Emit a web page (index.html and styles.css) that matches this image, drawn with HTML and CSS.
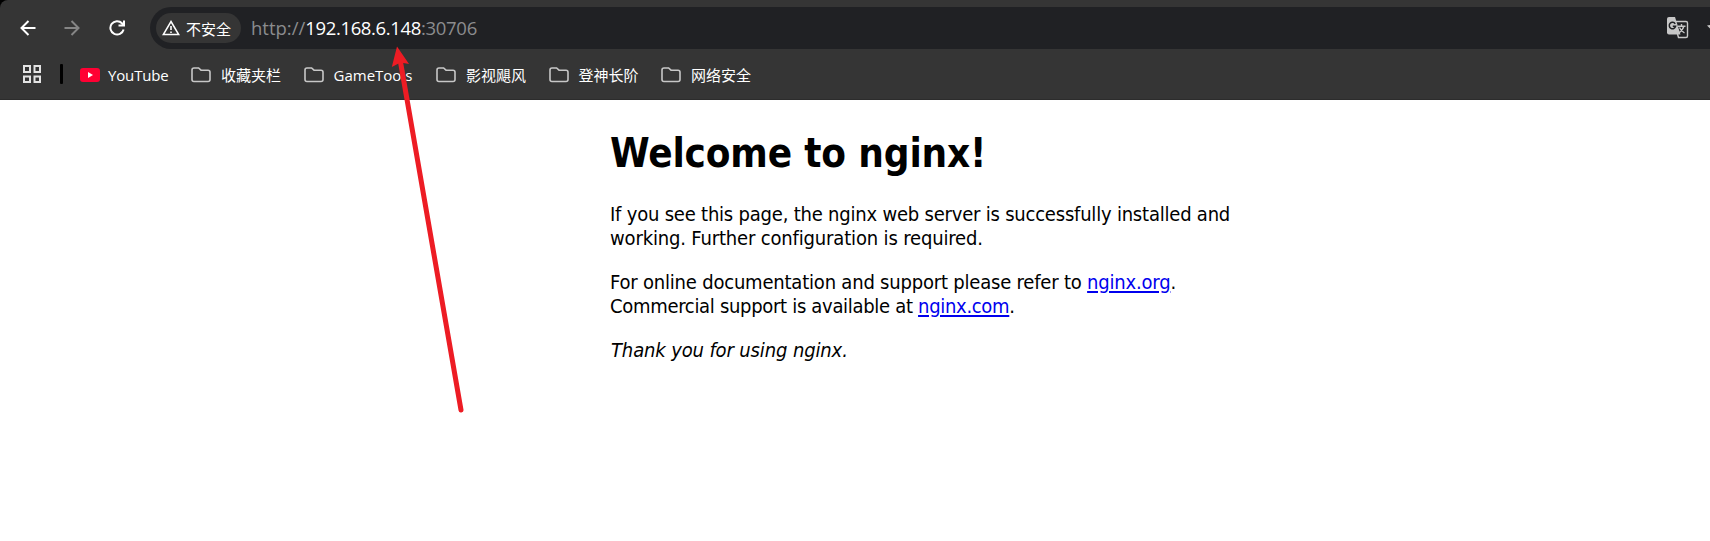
FILE: index.html
```html
<!DOCTYPE html>
<html lang="zh-CN">
<head>
<meta charset="utf-8">
<title>Welcome to nginx!</title>
<link rel="stylesheet" href="styles.css">
</head>
<body>
<svg class="defs" width="0" height="0">
  <symbol id="folder" viewBox="0 0 20 16"><path d="M1 3Q1 1 3 1H7.6L10 3.2H17Q19 3.2 19 5.200V12.500Q19 14.500 17 14.500H3Q1 14.500 1 12.500Z" fill="none" stroke="#c7c7c7" stroke-width="1.6"/></symbol>
</svg>
<div class="chrome">
  <div class="toolbar">
    <svg class="nav back" width="16" height="16" viewBox="0 0 16 16"><path d="M15.500 8H2M8.500 1L1.500 8L8.500 15"/></svg>
    <svg class="nav forward" width="16" height="16" viewBox="0 0 16 16"><path d="M.5 8H14M7.500 1L14.500 8L7.500 15"/></svg>
    <svg class="nav reload" width="16" height="16" viewBox="0 0 16 16"><path d="M14.600 9.500A6.700 6.700 0 1 1 13 3.300L14.500 4.800M15 .5V5.600H9.500"/></svg>
    <div class="omnibox">
      <div class="chip">
        <svg width="18" height="16" viewBox="0 0 18 16"><path d="M9 1.500L16.700 14.600H1.300Z" fill="none" stroke="#fff" stroke-width="1.500"/><path d="M9 6V10M9 11.400V13" stroke="#fff" stroke-width="1.600"/></svg>
        <span>不安全</span>
      </div>
      <div class="url"><span class="scheme">http://</span><span class="host">192.168.6.148</span><span class="port">:30706</span></div>
      <svg class="translate" width="22" height="22" viewBox="0 0 22 22">
        <path d="M2 0H8L13.500 17.500H2Q0 17.500 0 15.500V2Q0 0 2 0Z" fill="#c7c7c7"/>
        <path d="M9 4.500H19Q20.500 4.500 20.500 6V19Q20.500 20.500 19 20.500H11.500L10.500 17" fill="none" stroke="#c7c7c7" stroke-width="1.400"/>
        <path d="M8.200 6.800A3.200 3.200 0 1 0 8.600 9.300H5.800" fill="none" stroke="#202124" stroke-width="1.500"/>
        <path d="M11 9.200H18.500M14.500 7V9M16.800 9.200Q16 13 12 16M12.500 10.500Q14 14 17.500 16" fill="none" stroke="#c7c7c7" stroke-width="1.400"/>
      </svg>
      <svg class="star" width="3" height="6" viewBox="0 0 3 6"><path d="M0 .5L3 0V3.500Z" fill="#c7c7c7"/></svg>
    </div>
  </div>
  <div class="bookmarks">
    <svg class="apps" width="18" height="18" viewBox="0 0 18 18"><path d="M1 1H7V7H1ZM11.500 1H17V7H11.500ZM1 11.500H7V17H1ZM11.500 11.500H17V17H11.500Z"/></svg>
    <div class="divider"></div>
    <div class="mark yt"><svg width="20" height="14" viewBox="0 0 20 14"><rect width="20" height="14" rx="3" fill="#ff0033"/><path d="M8 4L13 7L8 10Z" fill="#fff"/></svg><span>YouTube</span></div>
    <div class="mark m1"><svg width="20" height="16"><use href="#folder"/></svg><span>收藏夹栏</span></div>
    <div class="mark m2"><svg width="20" height="16"><use href="#folder"/></svg><span class="latin">GameTools</span></div>
    <div class="mark m3"><svg width="20" height="16"><use href="#folder"/></svg><span>影视飓风</span></div>
    <div class="mark m4"><svg width="20" height="16"><use href="#folder"/></svg><span>登神长阶</span></div>
    <div class="mark m5"><svg width="20" height="16"><use href="#folder"/></svg><span>网络安全</span></div>
  </div>
</div>
<main class="page">
  <h1>Welcome to nginx!</h1>
  <p><span class="l1">If you see this page, the nginx web server is successfully installed and</span><br><span class="l2">working. Further configuration is required.</span></p>
  <p><span class="l3">For online documentation and support please refer to <a href="#">nginx.org</a>.</span><br><span class="l4">Commercial support is available at <a href="#">nginx.com</a>.</span></p>
  <p><em>Thank you for using nginx.</em></p>
</main>
<svg class="arrow" width="90" height="380" viewBox="380 40 90 380"><path d="M400.500 62L461 410" stroke="#ed1c24" stroke-width="5" stroke-linecap="round"/><path d="M397 46.500L409 64L400.500 62.500L391.800 67Z" fill="#ed1c24"/></svg>
</body>
</html>
```
FILE: styles.css
```css
* { box-sizing: border-box; }
html { background: #fff linear-gradient(#000, #000) 0 0 / 10px 10px no-repeat; }
body { margin: 0; height: 541px; overflow: hidden; font-family: "Noto Sans", "Noto Sans CJK SC", sans-serif; }
.defs, .arrow { position: absolute; }
.defs { left: 0; top: 0; }
.arrow { left: 380px; top: 40px; fill: none; }
.chrome { height: 100px; padding-top: 7px; background: #353535; color: #fff; border-top-left-radius: 8px; border-bottom: 1px solid #2c2c2c; }
.toolbar { display: flex; align-items: center; height: 42px; padding-left: 20px; }
.nav { flex: none; fill: none; stroke: #fff; stroke-width: 2; margin-top: -1px; }
.forward { stroke: #858585; margin-left: 28px; }
.reload { margin-left: 29px; }
.omnibox { flex: 1; display: flex; align-items: center; height: 42px; margin-left: 25px; padding-left: 6px; background: #202124; border-radius: 21px 0 0 21px; }
.chip { display: flex; align-items: center; gap: 6px; width: 85px; height: 30px; padding-left: 6px; border-radius: 15px; background: #353535; font: 15px/30px "Noto Sans CJK SC", sans-serif; white-space: nowrap; }
.chip svg { flex: none; }
.chip span { padding-top: 2px; }
.url { display: flex; margin-left: 10px; font: 18.5px/30px "Open Sans", sans-serif; color: #8b8c8e; }
.host { color: #fff; letter-spacing: -.36px; }
.port { letter-spacing: -.3px; }
.translate { margin-left: auto; }
.star { margin-left: 18px; }
.bookmarks { display: flex; align-items: center; height: 51px; padding: 0 0 1px 23px; font: 15px/24px "Open Sans", "Noto Sans CJK SC", sans-serif; }
.apps { fill: none; stroke: #e3e3e3; stroke-width: 2; }
.divider { width: 3px; height: 20px; margin-left: 19px; background: #000; border-radius: 1px; }
.mark { display: flex; align-items: center; gap: 10px; width: 112.500px; white-space: nowrap; }
.mark svg { flex: none; margin-top: 2px; }
.mark span { padding-top: 2px; }
.yt { margin-left: 17px; width: 111px; gap: 8px; }
.yt span { letter-spacing: -.15px; }
.m2 { width: 132.500px; }
.page { width: 700px; margin: 0 auto 0 610px; padding-top: 29px; font: 20px/24px "DejaVu Sans Condensed", "DejaVu Sans", sans-serif; font-stretch: condensed; font-variant-ligatures: none; color: #000; }
h1 { margin: 0; font-size: 40px; line-height: 48px; letter-spacing: -.15px; }
p { margin: 20px 0; }
h1 + p { margin-top: 25px; }
.l1 { letter-spacing: -.21px; }
.l2 { letter-spacing: -.16px; }
.l3 { letter-spacing: -.2px; }
.l4 { letter-spacing: -.31px; }
em { letter-spacing: -.13px; padding-left: 1px; }
a { color: #00e; text-underline-offset: 2px; }
```
